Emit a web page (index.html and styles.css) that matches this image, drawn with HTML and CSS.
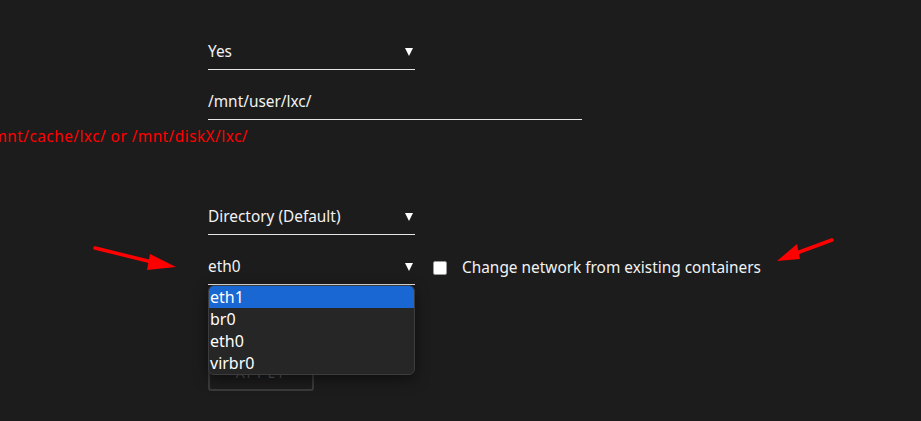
FILE: index.html
```html
<!DOCTYPE html>
<html lang="en">
<head>
  <meta charset="UTF-8">
  <title>LXC Settings</title>
  <link rel="stylesheet" href="styles.css">
</head>
<body>

<div class="form">
  <div class="row">
    <div class="field short">
      <span>Yes</span>
      <span class="caret"></span>
    </div>
  </div>

  <div class="row">
    <div class="field long">
      <span>/mnt/user/lxc/</span>
    </div>
  </div>

  <div class="note-row">
    <div class="note">Path must be on /mnt/cache/lxc/ or /mnt/diskX/lxc/</div>
  </div>

  <div class="row">
    <div class="field short">
      <span>Directory (Default)</span>
      <span class="caret"></span>
    </div>
  </div>

  <div class="row">
    <div class="field short">
      <span>eth0</span>
      <span class="caret"></span>
      <ul class="menu">
        <li class="active">eth1</li>
        <li>br0</li>
        <li>eth0</li>
        <li>virbr0</li>
      </ul>
    </div>
    <label class="check">
      <span class="box"></span>
      Change network from existing containers
    </label>
  </div>

  <div class="row">
    <button class="apply">APPLY</button>
  </div>
</div>

<svg class="arrow arrow-left" width="100" height="40" viewBox="0 0 100 40">
  <line x1="5" y1="8" x2="62" y2="22" stroke="#ff0000" stroke-width="3.5" stroke-linecap="round"/>
  <polygon points="86,27 60,14 57,30" fill="#ff0000"/>
</svg>

<svg class="arrow arrow-right" width="80" height="40" viewBox="0 0 80 40">
  <line x1="62" y1="10" x2="24" y2="24" stroke="#ff0000" stroke-width="3.5" stroke-linecap="round"/>
  <polygon points="7,31 27,14 30,29" fill="#ff0000"/>
</svg>

</body>
</html>
```

FILE: styles.css
```css
body {
  margin: 0;
  background-color: #1c1c1c;
  color: #f2f2f2;
  font-family: 'Noto Sans', 'Open Sans', sans-serif;
  font-size: 15.4px;
  overflow: hidden;
  height: 421px;
  position: relative;
}
.form {
  padding-top: 40px;
  padding-left: 208px;
}
.row {
  display: flex;
  align-items: flex-end;
  margin-bottom: 20px;
}
.field {
  position: relative;
  display: flex;
  align-items: flex-end;
  justify-content: space-between;
  height: 30px;
  line-height: 20px;
  padding-bottom: 7px;
  box-sizing: border-box;
  border-bottom: 1px solid #e6e6e6;
}
.short {
  width: 207px;
}
.long {
  width: 374px;
}
.caret {
  width: 0;
  height: 0;
  border-left: 4px solid transparent;
  border-right: 4px solid transparent;
  border-top: 8px solid #ffffff;
  margin: 0 2px 6px 0;
}
.note-row {
  display: flex;
  justify-content: flex-end;
  margin-left: -208px;
  width: 248px;
  margin-top: -13px;
  margin-bottom: 58px;
  line-height: 20px;
}
.note {
  color: #ff0000;
  white-space: nowrap;
  flex-shrink: 0;
  letter-spacing: 0.45px;
}
.check {
  display: flex;
  align-items: center;
  line-height: 20px;
  margin-left: 18px;
  padding-bottom: 7px;
}
.box {
  width: 12px;
  height: 12px;
  background-color: #ffffff;
  border: 1px solid #999;
  border-radius: 2px;
  margin-right: 15px;
}
.menu {
  position: absolute;
  top: 30px;
  left: 0;
  width: 205px;
  margin: 0;
  padding: 0;
  list-style: none;
  background-color: #262626;
  border: 1px solid #3c3c3c;
  border-radius: 6px;
  overflow: hidden;
  z-index: 2;
  box-shadow: 0 4px 14px rgba(0, 0, 0, 0.5);
  font-size: 16px;
}
.menu li {
  height: 22px;
  line-height: 22px;
  padding-left: 1px;
  color: #ffffff;
}
.menu li.active {
  background-color: #1967d2;
}
.apply {
  margin-top: 48px;
  width: 106px;
  height: 38px;
  background: transparent;
  border: 2px solid #3a3a3a;
  border-radius: 3px;
  color: #555;
  font-family: inherit;
  font-size: 14px;
  letter-spacing: 2px;
}
.arrow {
  position: absolute;
}
.arrow-left {
  left: 90px;
  top: 240px;
}
.arrow-right {
  left: 770px;
  top: 230px;
}
```
